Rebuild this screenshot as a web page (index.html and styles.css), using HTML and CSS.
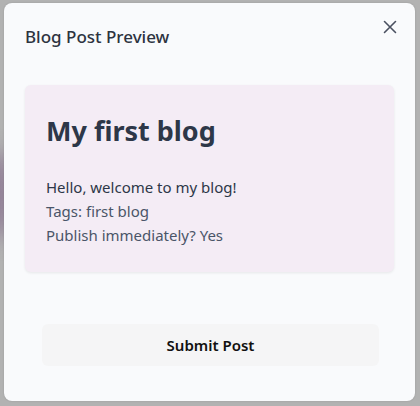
FILE: index.html
```html
<!DOCTYPE html>
<html>
<head>
<meta charset="utf-8">
<link rel="stylesheet" href="styles.css">
</head>
<body>
<div class="backdrop">
  <div class="blur"></div>
  <section class="modal">
    <header class="modal-header">
      <h2 class="modal-title">Blog Post Preview</h2>
      <button class="close" aria-label="Close">
        <svg width="14" height="14" viewBox="0 0 14 14"><path d="M1.5 1.5 L12.5 12.5 M12.5 1.5 L1.5 12.5" stroke="#4a5060" stroke-width="1.6" stroke-linecap="round" fill="none"/></svg>
      </button>
    </header>
    <div class="modal-body">
      <article class="card">
        <h1 class="post-title">My first blog</h1>
        <p class="post-content">Hello, welcome to my blog!</p>
        <p class="post-meta">Tags: first blog</p>
        <p class="post-meta">Publish immediately? Yes</p>
      </article>
    </div>
    <footer class="modal-footer">
      <button class="submit">Submit Post</button>
    </footer>
  </section>
</div>
</body>
</html>
```

FILE: styles.css
```css
html, body {
  margin: 0;
  padding: 0;
}
body {
  width: 420px;
  height: 406px;
  overflow: hidden;
  background: #b2b2b2;
  font-family: "Noto Sans", "Open Sans", sans-serif;
}
.backdrop {
  position: relative;
  width: 420px;
  height: 406px;
  padding: 3px 5px 5px 4px;
  box-sizing: border-box;
}
.blur {
  position: absolute;
  left: -20px;
  top: 150px;
  width: 30px;
  height: 90px;
  background: #8e7a94;
  filter: blur(10px);
  border-radius: 50%;
}
.modal {
  position: relative;
  width: 411px;
  height: 398px;
  background: #f9fafc;
  border-radius: 8px;
  box-shadow: 0 0 2px rgba(0,0,0,0.15);
  display: flex;
  flex-direction: column;
  box-sizing: border-box;
}
.modal-header {
  display: flex;
  align-items: center;
  justify-content: space-between;
  height: 66px;
  padding: 0 11px 0 21px;
}
.modal-title {
  margin: 0;
  font-size: 17px;
  font-weight: 500;
  color: #2d3340;
}
.close {
  border: 0;
  background: transparent;
  padding: 0;
  width: 28px;
  height: 28px;
  margin-top: -18px;
  display: flex;
  align-items: center;
  justify-content: center;
}
.modal-body {
  padding: 16px 21px 0 21px;
}
.card {
  background: #f4ecf5;
  border-radius: 6px;
  box-shadow: 0 1px 3px rgba(0,0,0,0.08);
  padding: 24px 21px 22px 21px;
  height: 187px;
  box-sizing: border-box;
}
.post-title {
  margin: 0 0 22px 0;
  font-size: 27px;
  font-weight: 700;
  color: #2d3748;
  line-height: 44px;
}
.post-content, .post-meta {
  margin: 0;
  font-size: 15px;
  line-height: 24px;
}
.post-content { color: #2d3748; }
.post-meta { color: #4a5568; }
.modal-footer {
  padding: 52px 36px 0 38px;
}
.submit {
  width: 100%;
  height: 42px;
  border: 0;
  border-radius: 6px;
  background: #f5f5f6;
  font-family: inherit;
  font-size: 15px;
  font-weight: 600;
  color: #111;
}
```
